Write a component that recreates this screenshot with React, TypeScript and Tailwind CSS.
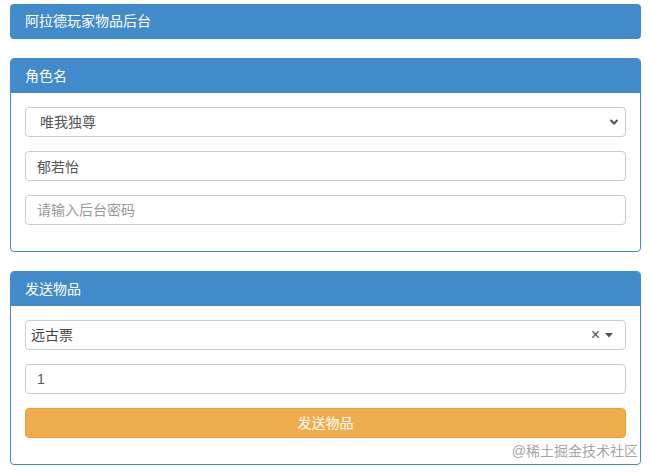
import { useState } from "react"

const FONT = { fontFamily: '"Liberation Sans", "Noto Sans CJK SC", sans-serif' }

function Panel({ title, children }: { title: string; children: React.ReactNode }) {
  return (
    <div className="mt-[19px] rounded-[4px] border border-[#428bca] bg-white">
      <div className="flex h-[34px] items-center rounded-t-[3px] bg-[#428bca] px-[14px] text-[14px] text-white">
        {title}
      </div>
      <div className="flex flex-col gap-[14px] px-[14px] pb-[26px] pt-[14px]">{children}</div>
    </div>
  )
}

export default function App() {
  const [role, setRole] = useState("唯我独尊")
  const [name, setName] = useState("郁若怡")
  const [pwd, setPwd] = useState("")
  const [count, setCount] = useState("1")

  return (
    <div className="relative min-h-[472px] bg-white px-[10px] pt-[4px] text-[14px] text-[#555]" style={FONT}>
      {/* Title bar */}
      <div className="flex h-[35px] items-center rounded-[4px] bg-[#428bca] px-[15px] text-[14px] text-white">
        阿拉德玩家物品后台
      </div>

      {/* Role */}
      <Panel title="角色名">
        <div className="relative">
          <select
            value={role}
            onChange={(e) => setRole(e.target.value)}
            className="block h-[30px] w-full appearance-none rounded-[4px] border border-[#ccc] bg-white pl-[14px] text-[14px] text-[#555] outline-none"
            style={FONT}
          >
            <option>唯我独尊</option>
            <option>剑魂</option>
          </select>
          <svg
            className="pointer-events-none absolute right-[7px] top-[11px]"
            width="10"
            height="8"
            viewBox="0 0 10 8"
          >
            <path d="M1.5 2 L5 5.5 L8.5 2" fill="none" stroke="#555" strokeWidth="2" />
          </svg>
        </div>
        <input
          value={name}
          onChange={(e) => setName(e.target.value)}
          className="h-[30px] w-full rounded-[4px] border border-[#ccc] px-[11px] text-[14px] text-[#555] outline-none"
          style={FONT}
        />
        <input
          value={pwd}
          onChange={(e) => setPwd(e.target.value)}
          placeholder="请输入后台密码"
          className="h-[30px] w-full rounded-[4px] border border-[#ccc] px-[11px] text-[14px] text-[#555] outline-none placeholder:text-[#999]"
          style={FONT}
        />
      </Panel>

      {/* Send item */}
      <Panel title="发送物品">
        <div className="flex h-[30px] w-full items-center rounded-[4px] border border-[#ccc] bg-white pl-[5px] pr-[12px]">
          <span className="flex-1 text-[14px] text-[#444]">远古票</span>
          <span className="mr-[5px] text-[16px] leading-none text-[#555]">×</span>
          <svg width="8" height="5" viewBox="0 0 8 5">
            <path d="M0 0 L8 0 L4 4.5 Z" fill="#555" />
          </svg>
        </div>
        <input
          value={count}
          onChange={(e) => setCount(e.target.value)}
          className="h-[30px] w-full rounded-[4px] border border-[#ccc] px-[11px] text-[14px] text-[#555] outline-none"
          style={FONT}
        />
        <button
          className="h-[30px] w-full rounded-[4px] border border-[#eea236] bg-[#f0ad4e] text-[14px] text-white"
          style={FONT}
        >
          发送物品
        </button>
      </Panel>

      {/* Watermark */}
      <div className="absolute right-[13px] top-[441px] text-[14px] text-[#a6a6a6]">@稀土掘金技术社区</div>
    </div>
  )
}
